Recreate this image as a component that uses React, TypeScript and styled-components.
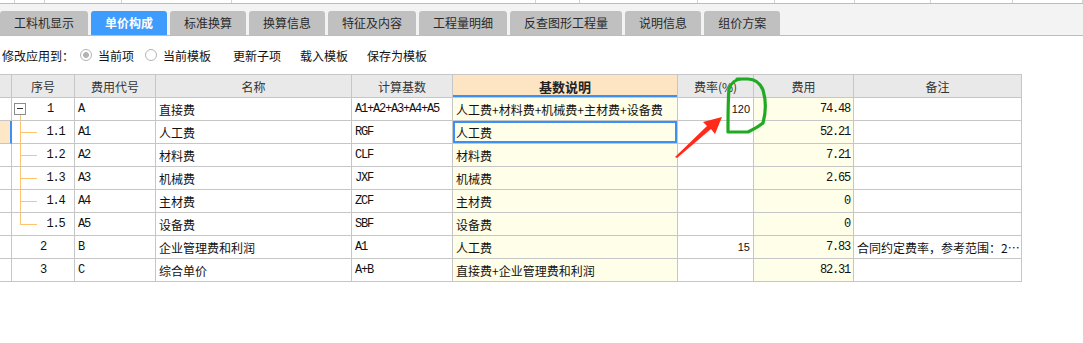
import styled, { createGlobalStyle } from "styled-components";

const GlobalStyle = createGlobalStyle`
  * { box-sizing: border-box; }
  body {
    margin: 0;
    background: #fff;
    font-family: "Noto Sans CJK SC", "Noto Sans", sans-serif;
    font-size: 12px;
    color: #111;
  }
`;

const MONO = `"Liberation Mono", "DejaVu Sans Mono", monospace`;
const LINE = "#c6c6c6";
const TREE = "#ffc46e";
const BLUE = "#3b8ff5";

const Page = styled.div`
  position: relative;
  width: 1083px;
  height: 343px;
  overflow: hidden;
  background: #fff;
`;

const Remnant = styled.div`
  display: grid;
  grid-template-columns: 15px 30px 77px 110px 304px 44px 118px 77px 80px 76px 82px 1fr;
  height: 4px;
  background: #fff;
  border-bottom: 1px solid #bcbcbc;

  & > span {
    border-right: 1px solid #d4d4d4;
  }
`;

const TabBar = styled.div`
  display: flex;
  align-items: flex-end;
  gap: 3px;
  height: 32px;
  padding-top: 7px;
  background: #f3f3f3;
  border-bottom: 1px solid #bdbdbd;
`;

const Tab = styled.div<{ $active?: boolean }>`
  height: 24px;
  line-height: 24px;
  padding: 0 14px;
  border-radius: 3px 3px 0 0;
  background: ${(p) => (p.$active ? "#3e9cff" : "#c0c0c0")};
  color: ${(p) => (p.$active ? "#fff" : "#2a2a2a")};
  font-weight: ${(p) => (p.$active ? 700 : 400)};
  white-space: nowrap;
`;

const Toolbar = styled.div`
  display: flex;
  align-items: center;
  height: 38px;
  padding-left: 2px;
  color: #111;
`;

const Label = styled.span<{ $gap?: number }>`
  margin-left: ${(p) => p.$gap ?? 0}px;
  white-space: nowrap;
`;

const Radio = styled.span<{ $checked?: boolean; $gap?: number }>`
  width: 12px;
  height: 12px;
  margin-left: ${(p) => p.$gap ?? 0}px;
  margin-right: 6px;
  border: 1px solid #b4b4b4;
  border-radius: 50%;
  background: ${(p) =>
    p.$checked
      ? "radial-gradient(circle, #b3b3b3 0 2.6px, #fff 3.2px)"
      : "#fff"};
`;

const Table = styled.div`
  display: grid;
  grid-template-columns: 12px 63px 81px 196px 101px 225px 76px 100px 168px;
  width: 1022px;
  border-top: 1px solid ${LINE};
`;

const HeadCell = styled.div<{ $hot?: boolean }>`
  height: 23px;
  display: flex;
  align-items: center;
  justify-content: center;
  border-right: 1px solid ${LINE};
  border-bottom: 1px solid ${LINE};
  background: ${(p) => (p.$hot ? "#fde5c3" : "#e9e9e9")};
  color: ${(p) => (p.$hot ? "#222" : "#333")};
  font-weight: ${(p) => (p.$hot ? 700 : 400)};
  font-size: ${(p) => (p.$hot ? "13px" : "12px")};
  box-shadow: ${(p) => (p.$hot ? `inset 0 -2px 0 ${BLUE}` : "none")};
  white-space: nowrap;
  overflow: hidden;
`;

const Marker = styled.div<{ $active?: boolean }>`
  height: 23px;
  border-bottom: 1px solid ${LINE};
  border-right: ${(p) => (p.$active ? `2px solid ${BLUE}` : `1px solid ${LINE}`)};
  background: ${(p) => (p.$active ? "#fde7c6" : "#fff")};
`;

const Cell = styled.div<{
  $align?: "left" | "right";
  $tint?: boolean;
  $mono?: boolean;
  $sans?: boolean;
  $focus?: boolean;
}>`
  height: 23px;
  display: flex;
  align-items: center;
  justify-content: ${(p) => (p.$align === "right" ? "flex-end" : "flex-start")};
  padding: 0 3px;
  border-right: 1px solid ${LINE};
  border-bottom: 1px solid ${LINE};
  background: ${(p) => (p.$tint ? "#fffee9" : "#fff")};
  font-family: ${(p) =>
    p.$mono ? MONO : p.$sans ? `"Liberation Sans", Arial, sans-serif` : "inherit"};
  font-size: ${(p) => (p.$mono ? "12px" : p.$sans ? "11px" : "12px")};
  letter-spacing: ${(p) => (p.$mono ? "-1.2px" : "0")};
  box-shadow: ${(p) => (p.$focus ? `inset 0 0 0 2px ${BLUE}` : "none")};
  white-space: nowrap;
  overflow: hidden;
  color: #111;
`;

const NoteCell = styled(Cell)`
  padding: 0 0 0 3px;
`;

const SeqCell = styled.div<{ $trunk?: boolean }>`
  height: 23px;
  display: flex;
  align-items: stretch;
  border-right: 1px solid ${LINE};
  border-bottom: 1px solid ${LINE};
  background: ${(p) =>
    p.$trunk
      ? `linear-gradient(${TREE}, ${TREE}) 8px 17px / 1px 6px no-repeat, #fff`
      : "#fff"};
  font-family: ${MONO};
  font-size: 12px;
  letter-spacing: -1.2px;
`;

const Toggle = styled.span`
  position: relative;
  align-self: center;
  width: 12px;
  height: 12px;
  margin-left: 2px;
  border: 1px solid #8c8c8c;
  background: #fff;

  &::after {
    content: "";
    position: absolute;
    left: 2px;
    right: 2px;
    top: 4px;
    height: 1px;
    background: #333;
  }
`;

const Branch = styled.span<{ $last?: boolean }>`
  flex: none;
  width: 17px;
  margin-left: 8px;
  background:
    linear-gradient(${TREE}, ${TREE}) 0 0 / 1px ${(p) => (p.$last ? "50%" : "100%")} no-repeat,
    linear-gradient(${TREE}, ${TREE}) 0 50% / 100% 1px no-repeat;
`;

const SeqText = styled.span`
  flex: 1;
  display: flex;
  align-items: center;
  justify-content: center;
`;

const Overlay = styled.svg`
  position: absolute;
  left: 0;
  top: 0;
  pointer-events: none;
`;

type Row = {
  no: string;
  kind: "root" | "child" | "plain";
  last?: boolean;
  active?: boolean;
  code: string;
  name: string;
  base: string;
  desc: string;
  rate?: string;
  fee: string;
  note?: string;
};

const rows: Row[] = [
  { no: "1", kind: "root", code: "A", name: "直接费", base: "A1+A2+A3+A4+A5", desc: "人工费+材料费+机械费+主材费+设备费", rate: "120", fee: "74.48" },
  { no: "1.1", kind: "child", active: true, code: "A1", name: "人工费", base: "RGF", desc: "人工费", fee: "52.21" },
  { no: "1.2", kind: "child", code: "A2", name: "材料费", base: "CLF", desc: "材料费", fee: "7.21" },
  { no: "1.3", kind: "child", code: "A3", name: "机械费", base: "JXF", desc: "机械费", fee: "2.65" },
  { no: "1.4", kind: "child", code: "A4", name: "主材费", base: "ZCF", desc: "主材费", fee: "0" },
  { no: "1.5", kind: "child", last: true, code: "A5", name: "设备费", base: "SBF", desc: "设备费", fee: "0" },
  { no: "2", kind: "plain", code: "B", name: "企业管理费和利润", base: "A1", desc: "人工费", rate: "15", fee: "7.83", note: "合同约定费率，参考范围：2…" },
  { no: "3", kind: "plain", code: "C", name: "综合单价", base: "A+B", desc: "直接费+企业管理费和利润", fee: "82.31" },
];

const tabs = ["工料机显示", "单价构成", "标准换算", "换算信息", "特征及内容", "工程量明细", "反查图形工程量", "说明信息", "组价方案"];
const headers = ["序号", "费用代号", "名称", "计算基数", "基数说明", "费率(%)", "费用", "备注"];

export default function App() {
  return (
    <Page>
      <GlobalStyle />
      <Remnant>
        {Array.from({ length: 12 }, (_, i) => (
          <span key={i} />
        ))}
      </Remnant>
      <TabBar>
        {tabs.map((t) => (
          <Tab key={t} $active={t === "单价构成"}>
            {t}
          </Tab>
        ))}
      </TabBar>
      <Toolbar>
        <Label>修改应用到：</Label>
        <Radio $checked $gap={6} />
        <Label>当前项</Label>
        <Radio $gap={11} />
        <Label>当前模板</Label>
        <Label $gap={22}>更新子项</Label>
        <Label $gap={19}>载入模板</Label>
        <Label $gap={19}>保存为模板</Label>
      </Toolbar>
      <Table>
        <HeadCell />
        {headers.map((h) => (
          <HeadCell key={h} $hot={h === "基数说明"}>
            {h}
          </HeadCell>
        ))}
        {rows.map((r) => [
          <Marker key={r.no + "m"} $active={r.active} />,
          <SeqCell key={r.no + "s"} $trunk={r.kind === "root"}>
            {r.kind === "root" && <Toggle />}
            {r.kind === "child" && <Branch $last={r.last} />}
            <SeqText>{r.no}</SeqText>
          </SeqCell>,
          <Cell key={r.no + "c"} $mono>
            {r.code}
          </Cell>,
          <Cell key={r.no + "n"}>{r.name}</Cell>,
          <Cell key={r.no + "b"} $mono>
            {r.base}
          </Cell>,
          <Cell key={r.no + "d"} $tint $focus={r.active}>
            {r.desc}
          </Cell>,
          <Cell key={r.no + "r"} $align="right" $sans>
            {r.rate}
          </Cell>,
          <Cell key={r.no + "f"} $align="right" $tint $mono>
            {r.fee}
          </Cell>,
          <NoteCell key={r.no + "k"}>{r.note}</NoteCell>,
        ])}
      </Table>
      <Overlay width={1083} height={343} viewBox="0 0 1083 343">
        <path
          d="M742 79 C736 79 731 83 729 89 C728 100 728 120 728 132 L748 132 C752 130 757 128 763 123 C766 112 766 100 763 90 C760 83 756 79 748 79 L737 79"
          fill="none"
          stroke="#1faa22"
          strokeWidth={3.2}
          strokeLinecap="round"
          strokeLinejoin="round"
        />
        <polygon
          points="675,157 707,126 703,122 722,117 715,134 711,129 677,158"
          fill="#ff2a1a"
        />
      </Overlay>
    </Page>
  );
}
